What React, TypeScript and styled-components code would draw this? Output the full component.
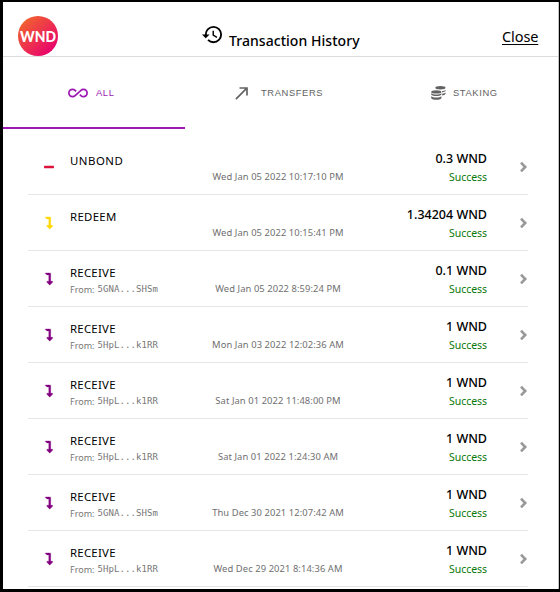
import React from 'react';
import styled, { createGlobalStyle } from 'styled-components';
import { MdHistory, MdAllInclusive, MdCallMade } from 'react-icons/md';
import { FaLevelDownAlt } from 'react-icons/fa';

const GlobalStyle = createGlobalStyle`
  * { box-sizing: border-box; }
  body { margin: 0; background: #000; }
  svg { display: block; flex: none; }
`;

const Popup = styled.main`
  width: 560px;
  height: 592px;
  overflow: hidden;
  background: #fff;
  border: solid #000;
  border-width: 2px 1px 3px 3px;
  box-shadow: inset -1px 0 #c4c4c4;
  font-family: 'Noto Sans', sans-serif;
  color: #000;
`;

const Header = styled.header`
  height: 55px;
  width: 555px;
  display: grid;
  grid-template-columns: 198px 1fr 56px;
  border-bottom: 1px solid #dcdcdc;
`;

const Logo = styled.svg`
  width: 40px;
  height: 40px;
  margin: 14px 0 0 15px;
  overflow: visible;
`;

const Heading = styled.div`
  display: flex;
`;

const HistoryIcon = styled(MdHistory)`
  width: 23px;
  height: 23px;
  margin-top: 21px;
`;

const Title = styled.h1`
  margin: 27px 0 0 5px;
  font-size: 14px;
  line-height: 24px;
  font-weight: 500;
  letter-spacing: 0.05px;
  white-space: nowrap;
`;

const Close = styled.a`
  justify-self: start;
  margin-top: 22px;
  font-size: 14.5px;
  line-height: 24px;
  letter-spacing: -0.1px;
  text-decoration: underline;
  text-underline-offset: 2px;
  white-space: nowrap;
`;

const Tabs = styled.nav`
  display: grid;
  grid-template-columns: 182px 187px 186px;
  height: 72px;
`;

const Tab = styled.div<{ $active?: boolean; $start: number; $gap: number }>`
  display: flex;
  align-items: center;
  gap: ${(p) => p.$gap}px;
  padding-top: 2px;
  padding-left: ${(p) => p.$start}px;
  border-bottom: 2px solid ${(p) => (p.$active ? '#9c1ab1' : 'transparent')};
  color: ${(p) => (p.$active ? '#9c1ab1' : '#626262')};
`;

const TabLabel = styled.span<{ $spacing: number }>`
  font: 9.4px/14px 'Liberation Sans', sans-serif;
  letter-spacing: ${(p) => p.$spacing}px;
`;

const List = styled.ul`
  list-style: none;
  width: 500px;
  margin: 10px 0 0 25px;
  padding: 0;
`;

const Row = styled.li`
  height: 56px;
  display: grid;
  grid-template-columns: 42px 118px 180px 119px 41px;
  border-bottom: 1px solid #e6e6e6;
`;

const KindIcon = styled.div<{ $color: string }>`
  display: flex;
  justify-content: center;
  align-items: center;
  color: ${(p) => p.$color};
  height: 56px;
`;

const Arrow = styled(FaLevelDownAlt)`
  stroke: currentColor;
  stroke-width: 14px;
  overflow: visible;
`;

const Column = styled.div`
  padding-top: 12px;
`;

const Action = styled.div<{ $spacing: number }>`
  font-size: 11.4px;
  line-height: 20px;
  letter-spacing: ${(p) => p.$spacing}px;
`;

const Sender = styled.div`
  display: flex;
  gap: 3px;
  font-size: 9px;
  line-height: 13px;
  color: #777;
  white-space: nowrap;
`;

const Address = styled.span`
  font-family: 'DejaVu Sans Mono', monospace;
  letter-spacing: 0.08px;
`;

const DateText = styled.div`
  align-self: start;
  padding-top: 31px;
  text-align: center;
  font-size: 9.4px;
  line-height: 14px;
  letter-spacing: 0.08px;
  color: #707070;
  white-space: nowrap;
`;

const Amount = styled.div`
  padding-top: 10px;
  text-align: right;
  font-size: 12.5px;
  line-height: 20px;
  font-weight: 500;
`;

const Status = styled.div`
  text-align: right;
  font-size: 10.5px;
  line-height: 16px;
  letter-spacing: -0.05px;
  color: #077707;
`;

const Chevron = styled.svg`
  width: 8px;
  height: 12px;
  margin: 22px 0 0 33px;
  fill: none;
  stroke: #999;
  stroke-width: 2.6px;
`;

type Kind = 'UNBOND' | 'REDEEM' | 'RECEIVE';
interface Transaction {
  kind: Kind;
  from?: string;
  date: string;
  amount: string;
}

const transactions: Transaction[] = [
  { kind: 'UNBOND', date: 'Wed Jan 05 2022 10:17:10 PM', amount: '0.3' },
  { kind: 'REDEEM', date: 'Wed Jan 05 2022 10:15:41 PM', amount: '1.34204' },
  { kind: 'RECEIVE', from: '5GNA...SHSm', date: 'Wed Jan 05 2022 8:59:24 PM', amount: '0.1' },
  { kind: 'RECEIVE', from: '5HpL...k1RR', date: 'Mon Jan 03 2022 12:02:36 AM', amount: '1' },
  { kind: 'RECEIVE', from: '5HpL...k1RR', date: 'Sat Jan 01 2022 11:48:00 PM', amount: '1' },
  { kind: 'RECEIVE', from: '5HpL...k1RR', date: 'Sat Jan 01 2022 1:24:30 AM', amount: '1' },
  { kind: 'RECEIVE', from: '5GNA...SHSm', date: 'Thu Dec 30 2021 12:07:42 AM', amount: '1' },
  { kind: 'RECEIVE', from: '5HpL...k1RR', date: 'Wed Dec 29 2021 8:14:36 AM', amount: '1' },
];

const kindColor: Record<Kind, string> = { UNBOND: '#dc143c', REDEEM: '#ffd700', RECEIVE: '#800080' };
const kindSpacing: Record<Kind, number> = { UNBOND: 0.5, REDEEM: 0.3, RECEIVE: 0.25 };

// Two offset stacks of coins, the front one at the lower left.
function CoinStacks() {
  return (
    <svg width="15" height="14" viewBox="0 0 15 14" fill="currentColor">
      <ellipse cx="9.4" cy="1.8" rx="5.1" ry="1.7" />
      <path d="M11 5.1c1.6-.1 2.9-.7 3.5-1.4v1.4c-.6.7-1.9 1.1-3.3 1.3zM11.2 7.8c1.3-.2 2.7-.6 3.3-1.2v1.4c-.6.8-1.9 1.2-3.3 1.4z" />
      <ellipse cx="5.3" cy="5.9" rx="5.1" ry="1.7" />
      <path d="M.2 7.3c1.5 1.7 8.7 1.7 10.2 0v1.4c-1.5 1.7-8.7 1.7-10.2 0zM.2 10.2c1.5 1.7 8.7 1.7 10.2 0v2c-1.5 2-8.7 2-10.2 0z" />
    </svg>
  );
}

function TransactionRow({ kind, from, date, amount }: Transaction) {
  return (
    <Row>
      <KindIcon $color={kindColor[kind]}>
        {kind === 'UNBOND' ? (
          <svg width="10" height="10" viewBox="0 0 10 10">
            <rect y="3.8" width="10" height="2.4" rx="0.4" fill="currentColor" />
          </svg>
        ) : (
          <Arrow size={12} />
        )}
      </KindIcon>
      <Column>
        <Action $spacing={kindSpacing[kind]}>{kind}</Action>
        {from && <Sender>From: <Address>{from}</Address></Sender>}
      </Column>
      <DateText>{date}</DateText>
      <div>
        <Amount>{amount} WND</Amount>
        <Status>Success</Status>
      </div>
      <Chevron viewBox="0 0 8 12">
        <path d="M1 1.7 5.2 6 1 10.3" />
      </Chevron>
    </Row>
  );
}

export default function App() {
  return (
    <>
      <GlobalStyle />
      <Popup>
        <Header>
          <Logo viewBox="0 0 40 40">
            <defs>
              <linearGradient id="logoFill" x1="0.1" y1="0.1" x2="0.85" y2="0.9">
                <stop offset="0" stopColor="#f2652c" />
                <stop offset="1" stopColor="#e8026d" />
              </linearGradient>
            </defs>
            <circle cx="20" cy="20" r="20" fill="url(#logoFill)" />
            <text x="20" y="26" textAnchor="middle" textLength="36" lengthAdjust="spacingAndGlyphs" fontFamily="Lato, sans-serif" fontWeight="900" fontSize="15.5" fill="#fff">WND</text>
          </Logo>
          <Heading>
            <HistoryIcon />
            <Title>Transaction History</Title>
          </Heading>
          <Close>Close</Close>
        </Header>
        <Tabs>
          <Tab $active $start={65} $gap={8}>
            <MdAllInclusive size={20} />
            <TabLabel $spacing={0.6}>ALL</TabLabel>
          </Tab>
          <Tab $start={47} $gap={9}>
            <MdCallMade size={20} />
            <TabLabel $spacing={0.6}>TRANSFERS</TabLabel>
          </Tab>
          <Tab $start={59} $gap={7}>
            <CoinStacks />
            <TabLabel $spacing={0.6}>STAKING</TabLabel>
          </Tab>
        </Tabs>
        <List>
          {transactions.map((t) => <TransactionRow key={t.date} {...t} />)}
        </List>
      </Popup>
    </>
  );
}
